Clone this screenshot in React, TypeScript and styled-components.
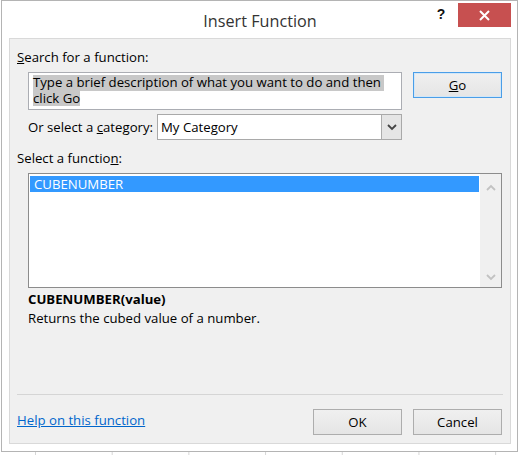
import React from "react";
import styled, { createGlobalStyle } from "styled-components";

const GlobalStyle = createGlobalStyle`
	html, body {
		margin: 0;
		padding: 0;
	}
	body {
		width: 521px;
		height: 455px;
		overflow: hidden;
		background-color: #fff;
		background-image: linear-gradient(90deg, #d6d6d6 1px, transparent 1px);
		background-size: 76.7px 100%;
		background-position: 35px 0;
		font-family: "Open Sans", "Noto Sans", sans-serif;
		font-size: 13.2px;
		color: #000;
	}
`;

const Window = styled.div`
	box-sizing: border-box;
	width: 517px;
	height: 452px;
	margin-left: 1px;
	padding: 0 6px 7px 7px;
	display: flex;
	flex-direction: column;
	background: #fff;
	border: 1px solid #b4b4b4;
`;

const TitleBar = styled.div`
	height: 37px;
	display: grid;
	grid-template-columns: 1fr auto 1fr;
	align-items: start;
`;

const Title = styled.div`
	grid-column: 2;
	margin-top: 9px;
	font-size: 16.2px;
	line-height: 22px;
	color: #333;
`;

const Controls = styled.div`
	grid-column: 3;
	justify-self: end;
	display: flex;
	align-items: flex-start;
`;

const HelpGlyph = styled.div`
	width: 20px;
	margin-top: 5px;
	margin-right: 7px;
	text-align: center;
	font-family: "Liberation Sans", Arial, sans-serif;
	font-weight: bold;
	font-size: 14px;
	line-height: 16px;
	color: #111;
`;

const CloseButton = styled.div`
	width: 53px;
	height: 24px;
	margin-top: 2px;
	display: flex;
	align-items: center;
	justify-content: center;
	background: #c75050;
`;

const Panel = styled.div`
	box-sizing: border-box;
	height: 406px;
	padding: 11px 7px 8px 7px;
	display: flex;
	flex-direction: column;
	background: #f0f0f0;
	border: 1px solid #d9d9d9;
`;

const Label = styled.div<{ $indent?: boolean; $bold?: boolean; $gap?: number }>`
	line-height: 15px;
	margin-left: ${(p) => (p.$indent ? "11px" : "0")};
	margin-top: ${(p) => p.$gap ?? 0}px;
	font-weight: ${(p) => (p.$bold ? 700 : 400)};
	white-space: nowrap;
`;

const Row = styled.div<{ $gap: number }>`
	display: flex;
	align-items: center;
	margin-top: ${(p) => p.$gap}px;
	margin-left: 11px;
`;

const SearchBox = styled.div`
	box-sizing: border-box;
	width: 374px;
	height: 38px;
	padding: 2px 4px;
	display: flex;
	flex-direction: column;
	align-items: flex-start;
	align-self: flex-start;
	background: #fff;
	border: 1px solid #abadb3;
	white-space: nowrap;
	overflow: hidden;
`;

const Selected = styled.span`
	display: block;
	height: 15.5px;
	line-height: 15.5px;
	background: #c8c8c8;
`;

const Button = styled.div<{ $default?: boolean }>`
	box-sizing: border-box;
	width: 89px;
	height: 26px;
	display: flex;
	align-items: center;
	justify-content: center;
	background: linear-gradient(#f0f0f0, #e5e5e5);
	border: 1px solid ${(p) => (p.$default ? "#4a9ee8" : "#adadad")};
	box-shadow: ${(p) => (p.$default ? "inset 0 0 0 1px #d2e7f8" : "none")};
`;

const GoButton = styled(Button)`
	margin-left: 11px;
	align-self: flex-start;
`;

const CategoryLabel = styled.div`
	width: 129px;
	line-height: 15px;
	white-space: nowrap;
`;

const SelectBox = styled.div`
	box-sizing: border-box;
	width: 245px;
	height: 26px;
	display: flex;
	align-items: stretch;
	background: #fff;
	border: 1px solid #a9a9a9;
`;

const SelectValue = styled.div`
	flex: 1;
	display: flex;
	align-items: center;
	padding-left: 3px;
`;

const SelectArrow = styled.div`
	width: 19px;
	display: flex;
	align-items: center;
	justify-content: center;
	background: #e5e5e5;
	border-left: 1px solid #acacac;
`;

const ListBox = styled.div`
	box-sizing: border-box;
	width: 474px;
	height: 115px;
	margin-top: 7px;
	margin-left: 11px;
	display: flex;
	background: #fff;
	border: 1px solid #8c8c8c;
`;

const ListItems = styled.div`
	flex: 1;
	padding: 2px 1px 0 1px;
`;

const ListItem = styled.div<{ $selected?: boolean }>`
	height: 16px;
	line-height: 16px;
	padding-left: 4px;
	background: ${(p) => (p.$selected ? "#3399ff" : "transparent")};
	color: ${(p) => (p.$selected ? "#fff" : "#000")};
`;

const ScrollBar = styled.div`
	width: 21px;
	display: flex;
	flex-direction: column;
	align-items: center;
	justify-content: space-between;
	padding: 10px 0 6px;
	background: #f0f0f0;
`;

const Spacer = styled.div`
	flex: 1;
`;

const Separator = styled.div`
	height: 1px;
	background: #d5d5d5;
`;

const Footer = styled.div`
	display: flex;
	align-items: center;
	margin-top: 14px;
	padding-right: 1px;
`;

const HelpLink = styled.a`
	flex: 1;
	padding-bottom: 3px;
	line-height: 15px;
	color: #0066cc;
	text-decoration: underline;
	cursor: pointer;
`;

const FooterButtons = styled.div`
	display: flex;
	gap: 11px;
`;

const Chevron = ({ up, color }: { up?: boolean; color: string }) => (
	<svg width="10" height="7" viewBox="0 0 10 7">
		<polyline
			points={up ? "1,6 5,2 9,6" : "1,1 5,5 9,1"}
			fill="none"
			stroke={color}
			strokeWidth="1.8"
		/>
	</svg>
);

export default function App() {
	return (
		<React.Fragment>
			<GlobalStyle />
			<Window>
				<TitleBar>
					<Title>Insert Function</Title>
					<Controls>
						<HelpGlyph>?</HelpGlyph>
						<CloseButton>
							<svg width="11" height="11" viewBox="0 0 11 11">
								<path d="M1 1 L10 10 M10 1 L1 10" stroke="#fff" strokeWidth="2" />
							</svg>
						</CloseButton>
					</Controls>
				</TitleBar>
				<Panel>
					<Label>
						<u>S</u>earch for a function:
					</Label>
					<Row $gap={7}>
						<SearchBox>
							<Selected>Type a brief description of what you want to do and then&nbsp;</Selected>
							<Selected>click Go</Selected>
						</SearchBox>
						<GoButton $default>
							<span>
								<u>G</u>o
							</span>
						</GoButton>
					</Row>
					<Row $gap={4}>
						<CategoryLabel>
							Or select a <u>c</u>ategory:
						</CategoryLabel>
						<SelectBox>
							<SelectValue>My Category</SelectValue>
							<SelectArrow>
								<Chevron color="#444" />
							</SelectArrow>
						</SelectBox>
					</Row>
					<Label $gap={11}>
						Select a functio<u>n</u>:
					</Label>
					<ListBox>
						<ListItems>
							<ListItem $selected>CUBENUMBER</ListItem>
						</ListItems>
						<ScrollBar>
							<Chevron up color="#c2c2c2" />
							<Chevron color="#c2c2c2" />
						</ScrollBar>
					</ListBox>
					<Label $indent $bold $gap={4}>
						CUBENUMBER(value)
					</Label>
					<Label $indent $gap={4}>
						Returns the cubed value of a number.
					</Label>
					<Spacer />
					<Separator />
					<Footer>
						<HelpLink>Help on this function</HelpLink>
						<FooterButtons>
							<Button>OK</Button>
							<Button>Cancel</Button>
						</FooterButtons>
					</Footer>
				</Panel>
			</Window>
		</React.Fragment>
	);
}
